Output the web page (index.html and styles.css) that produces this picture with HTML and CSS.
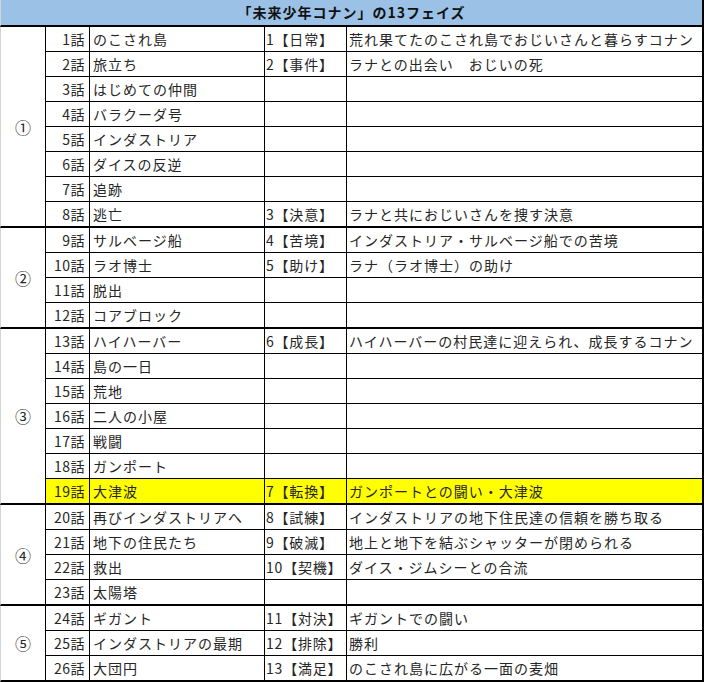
FILE: index.html
```html
<!DOCTYPE html>
<html lang="ja">
<head>
<meta charset="utf-8">
<link rel="stylesheet" href="styles.css">
</head>
<body>
<div class="sheet">
  <div class="head">「未来少年コナン」の13フェイズ</div>

  <div class="grp" style="grid-row: span 8">①</div>
  <div class="ep">1話</div><div class="tt">のこされ島</div><div class="ph">1【日常】</div><div class="ds">荒れ果てたのこされ島でおじいさんと暮らすコナン</div>
  <div class="ep">2話</div><div class="tt">旅立ち</div><div class="ph">2【事件】</div><div class="ds">ラナとの出会い　おじいの死</div>
  <div class="ep">3話</div><div class="tt">はじめての仲間</div><div class="ph"></div><div class="ds"></div>
  <div class="ep">4話</div><div class="tt">バラクーダ号</div><div class="ph"></div><div class="ds"></div>
  <div class="ep">5話</div><div class="tt">インダストリア</div><div class="ph"></div><div class="ds"></div>
  <div class="ep">6話</div><div class="tt">ダイスの反逆</div><div class="ph"></div><div class="ds"></div>
  <div class="ep">7話</div><div class="tt">追跡</div><div class="ph"></div><div class="ds"></div>
  <div class="ep end">8話</div><div class="tt end">逃亡</div><div class="ph end">3【決意】</div><div class="ds end">ラナと共におじいさんを捜す決意</div>

  <div class="grp" style="grid-row: span 4">②</div>
  <div class="ep">9話</div><div class="tt">サルベージ船</div><div class="ph">4【苦境】</div><div class="ds">インダストリア・サルベージ船での苦境</div>
  <div class="ep">10話</div><div class="tt">ラオ博士</div><div class="ph">5【助け】</div><div class="ds">ラナ（ラオ博士）の助け</div>
  <div class="ep">11話</div><div class="tt">脱出</div><div class="ph"></div><div class="ds"></div>
  <div class="ep end">12話</div><div class="tt end">コアブロック</div><div class="ph end"></div><div class="ds end"></div>

  <div class="grp" style="grid-row: span 7">③</div>
  <div class="ep">13話</div><div class="tt">ハイハーバー</div><div class="ph">6【成長】</div><div class="ds">ハイハーバーの村民達に迎えられ、成長するコナン</div>
  <div class="ep">14話</div><div class="tt">島の一日</div><div class="ph"></div><div class="ds"></div>
  <div class="ep">15話</div><div class="tt">荒地</div><div class="ph"></div><div class="ds"></div>
  <div class="ep">16話</div><div class="tt">二人の小屋</div><div class="ph"></div><div class="ds"></div>
  <div class="ep">17話</div><div class="tt">戦闘</div><div class="ph"></div><div class="ds"></div>
  <div class="ep">18話</div><div class="tt">ガンポート</div><div class="ph"></div><div class="ds"></div>
  <div class="ep end hl">19話</div><div class="tt end hl">大津波</div><div class="ph end hl">7【転換】</div><div class="ds end hl">ガンポートとの闘い・大津波</div>

  <div class="grp" style="grid-row: span 4">④</div>
  <div class="ep">20話</div><div class="tt">再びインダストリアへ</div><div class="ph">8【試練】</div><div class="ds">インダストリアの地下住民達の信頼を勝ち取る</div>
  <div class="ep">21話</div><div class="tt">地下の住民たち</div><div class="ph">9【破滅】</div><div class="ds">地上と地下を結ぶシャッターが閉められる</div>
  <div class="ep">22話</div><div class="tt">救出</div><div class="ph">10【契機】</div><div class="ds">ダイス・ジムシーとの合流</div>
  <div class="ep end">23話</div><div class="tt end">太陽塔</div><div class="ph end"></div><div class="ds end"></div>

  <div class="grp" style="grid-row: span 3">⑤</div>
  <div class="ep">24話</div><div class="tt">ギガント</div><div class="ph">11【対決】</div><div class="ds">ギガントでの闘い</div>
  <div class="ep">25話</div><div class="tt">インダストリアの最期</div><div class="ph">12【排除】</div><div class="ds">勝利</div>
  <div class="ep end">26話</div><div class="tt end">大団円</div><div class="ph end">13【満足】</div><div class="ds end">のこされ島に広がる一面の麦畑</div>
</div>
</body>
</html>
```

FILE: styles.css
```css
html, body {
  margin: 0;
  padding: 0;
  background: #ffffff;
}

.sheet {
  width: 704px;
  display: grid;
  grid-template-columns: 46px 44px 175px 82px 357px;
  font-family: "Noto Sans CJK JP", "Noto Sans", sans-serif;
  font-size: 14px;
  color: #262626;
}

.sheet > div {
  box-sizing: border-box;
  height: 25px;
  line-height: 24px;
  border-bottom: 1px solid #000;
  border-right: 1px solid #000;
  white-space: nowrap;
  overflow: hidden;
  letter-spacing: 1px;
}

.sheet > .head {
  grid-column: 1 / -1;
  height: 27px;
  line-height: 25px;
  border-bottom: 2px solid #000;
  border-right: 2px solid #000;
  border-left: 1px solid #d4d4d4;
  background: #9bc2e6;
  text-align: center;
  font-weight: 700;
  color: #111;
}

.sheet > .grp {
  height: auto;
  border-left: 1px solid #d4d4d4;
  border-bottom: 2px solid #000;
  display: flex;
  align-items: center;
  justify-content: center;
  font-size: 16px;
  letter-spacing: 0;
}

.sheet > .end {
  height: 26px;
  border-bottom-width: 2px;
}

.sheet > .ep {
  text-align: right;
  padding-right: 4px;
  letter-spacing: 0.5px;
}

.tt {
  padding-left: 3px;
}

.sheet > .ph {
  padding-left: 1px;
  letter-spacing: 0.8px;
}

.sheet > .ds {
  padding-left: 2px;
  border-right-width: 2px;
}

.hl {
  background: #ffff00;
}
```
